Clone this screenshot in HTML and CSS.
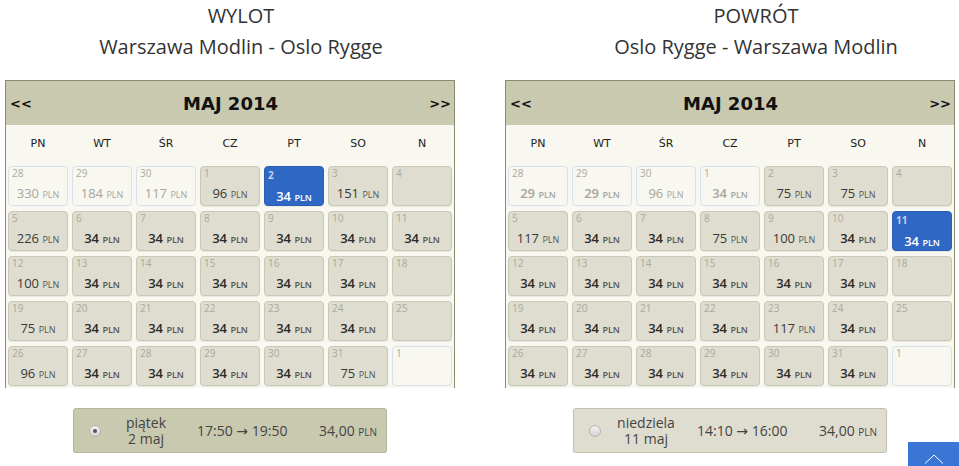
FILE: index.html
```html
<!DOCTYPE html>
<html lang="pl">

<head>
  <meta charset="UTF-8">
  <meta name="viewport" content="width=device-width, initial-scale=1.0">
  <title>Kalendarz lotów</title>
  <link rel="stylesheet" href="styles.css">
</head>

<body>
  <main class="flights">
    <!-- outbound -->
    <section class="route route--out">
      <h2 class="route-title">WYLOT<br>Warszawa Modlin - Oslo Rygge</h2>

      <div class="calendar">
        <header class="calendar-head">
          <span class="calendar-nav">&lt;&lt;</span>
          <span class="calendar-month">MAJ 2014</span>
          <span class="calendar-nav">&gt;&gt;</span>
        </header>

        <div class="weekdays">
          <span>PN</span><span>WT</span><span>ŚR</span><span>CZ</span><span>PT</span><span>SO</span><span>N</span>
        </div>

        <div class="days">
          <div class="day day--other"><span class="day-num">28</span><span class="price">330 <small>PLN</small></span></div>
          <div class="day day--other"><span class="day-num">29</span><span class="price">184 <small>PLN</small></span></div>
          <div class="day day--other"><span class="day-num">30</span><span class="price">117 <small>PLN</small></span></div>
          <div class="day"><span class="day-num">1</span><span class="price">96 <small>PLN</small></span></div>
          <div class="day day--selected"><span class="day-num">2</span><span class="price price--low">34 <small>PLN</small></span></div>
          <div class="day"><span class="day-num">3</span><span class="price">151 <small>PLN</small></span></div>
          <div class="day"><span class="day-num">4</span></div>

          <div class="day"><span class="day-num">5</span><span class="price">226 <small>PLN</small></span></div>
          <div class="day"><span class="day-num">6</span><span class="price price--low">34 <small>PLN</small></span></div>
          <div class="day"><span class="day-num">7</span><span class="price price--low">34 <small>PLN</small></span></div>
          <div class="day"><span class="day-num">8</span><span class="price price--low">34 <small>PLN</small></span></div>
          <div class="day"><span class="day-num">9</span><span class="price price--low">34 <small>PLN</small></span></div>
          <div class="day"><span class="day-num">10</span><span class="price price--low">34 <small>PLN</small></span></div>
          <div class="day"><span class="day-num">11</span><span class="price price--low">34 <small>PLN</small></span></div>

          <div class="day"><span class="day-num">12</span><span class="price">100 <small>PLN</small></span></div>
          <div class="day"><span class="day-num">13</span><span class="price price--low">34 <small>PLN</small></span></div>
          <div class="day"><span class="day-num">14</span><span class="price price--low">34 <small>PLN</small></span></div>
          <div class="day"><span class="day-num">15</span><span class="price price--low">34 <small>PLN</small></span></div>
          <div class="day"><span class="day-num">16</span><span class="price price--low">34 <small>PLN</small></span></div>
          <div class="day"><span class="day-num">17</span><span class="price price--low">34 <small>PLN</small></span></div>
          <div class="day"><span class="day-num">18</span></div>

          <div class="day"><span class="day-num">19</span><span class="price">75 <small>PLN</small></span></div>
          <div class="day"><span class="day-num">20</span><span class="price price--low">34 <small>PLN</small></span></div>
          <div class="day"><span class="day-num">21</span><span class="price price--low">34 <small>PLN</small></span></div>
          <div class="day"><span class="day-num">22</span><span class="price price--low">34 <small>PLN</small></span></div>
          <div class="day"><span class="day-num">23</span><span class="price price--low">34 <small>PLN</small></span></div>
          <div class="day"><span class="day-num">24</span><span class="price price--low">34 <small>PLN</small></span></div>
          <div class="day"><span class="day-num">25</span></div>

          <div class="day"><span class="day-num">26</span><span class="price">96 <small>PLN</small></span></div>
          <div class="day"><span class="day-num">27</span><span class="price price--low">34 <small>PLN</small></span></div>
          <div class="day"><span class="day-num">28</span><span class="price price--low">34 <small>PLN</small></span></div>
          <div class="day"><span class="day-num">29</span><span class="price price--low">34 <small>PLN</small></span></div>
          <div class="day"><span class="day-num">30</span><span class="price price--low">34 <small>PLN</small></span></div>
          <div class="day"><span class="day-num">31</span><span class="price">75 <small>PLN</small></span></div>
          <div class="day day--other"><span class="day-num">1</span></div>
        </div>
      </div>

      <label class="flight flight--checked">
        <span class="radio"></span>
        <span class="flight-date">piątek<br>2 maj</span>
        <span class="flight-time">17:50 → 19:50</span>
        <span class="flight-price">34,00 <small>PLN</small></span>
      </label>
    </section>

    <!-- return -->
    <section class="route route--back">
      <h2 class="route-title">POWRÓT<br>Oslo Rygge - Warszawa Modlin</h2>

      <div class="calendar">
        <header class="calendar-head">
          <span class="calendar-nav">&lt;&lt;</span>
          <span class="calendar-month">MAJ 2014</span>
          <span class="calendar-nav">&gt;&gt;</span>
        </header>

        <div class="weekdays">
          <span>PN</span><span>WT</span><span>ŚR</span><span>CZ</span><span>PT</span><span>SO</span><span>N</span>
        </div>

        <div class="days">
          <div class="day day--other"><span class="day-num">28</span><span class="price price--low">29 <small>PLN</small></span></div>
          <div class="day day--other"><span class="day-num">29</span><span class="price price--low">29 <small>PLN</small></span></div>
          <div class="day day--other"><span class="day-num">30</span><span class="price">96 <small>PLN</small></span></div>
          <div class="day day--other"><span class="day-num">1</span><span class="price price--low">34 <small>PLN</small></span></div>
          <div class="day"><span class="day-num">2</span><span class="price">75 <small>PLN</small></span></div>
          <div class="day"><span class="day-num">3</span><span class="price">75 <small>PLN</small></span></div>
          <div class="day"><span class="day-num">4</span></div>

          <div class="day"><span class="day-num">5</span><span class="price">117 <small>PLN</small></span></div>
          <div class="day"><span class="day-num">6</span><span class="price price--low">34 <small>PLN</small></span></div>
          <div class="day"><span class="day-num">7</span><span class="price price--low">34 <small>PLN</small></span></div>
          <div class="day"><span class="day-num">8</span><span class="price">75 <small>PLN</small></span></div>
          <div class="day"><span class="day-num">9</span><span class="price">100 <small>PLN</small></span></div>
          <div class="day"><span class="day-num">10</span><span class="price price--low">34 <small>PLN</small></span></div>
          <div class="day day--selected"><span class="day-num">11</span><span class="price price--low">34 <small>PLN</small></span></div>

          <div class="day"><span class="day-num">12</span><span class="price price--low">34 <small>PLN</small></span></div>
          <div class="day"><span class="day-num">13</span><span class="price price--low">34 <small>PLN</small></span></div>
          <div class="day"><span class="day-num">14</span><span class="price price--low">34 <small>PLN</small></span></div>
          <div class="day"><span class="day-num">15</span><span class="price price--low">34 <small>PLN</small></span></div>
          <div class="day"><span class="day-num">16</span><span class="price price--low">34 <small>PLN</small></span></div>
          <div class="day"><span class="day-num">17</span><span class="price price--low">34 <small>PLN</small></span></div>
          <div class="day"><span class="day-num">18</span></div>

          <div class="day"><span class="day-num">19</span><span class="price price--low">34 <small>PLN</small></span></div>
          <div class="day"><span class="day-num">20</span><span class="price price--low">34 <small>PLN</small></span></div>
          <div class="day"><span class="day-num">21</span><span class="price price--low">34 <small>PLN</small></span></div>
          <div class="day"><span class="day-num">22</span><span class="price price--low">34 <small>PLN</small></span></div>
          <div class="day"><span class="day-num">23</span><span class="price">117 <small>PLN</small></span></div>
          <div class="day"><span class="day-num">24</span><span class="price price--low">34 <small>PLN</small></span></div>
          <div class="day"><span class="day-num">25</span></div>

          <div class="day"><span class="day-num">26</span><span class="price price--low">34 <small>PLN</small></span></div>
          <div class="day"><span class="day-num">27</span><span class="price price--low">34 <small>PLN</small></span></div>
          <div class="day"><span class="day-num">28</span><span class="price price--low">34 <small>PLN</small></span></div>
          <div class="day"><span class="day-num">29</span><span class="price price--low">34 <small>PLN</small></span></div>
          <div class="day"><span class="day-num">30</span><span class="price price--low">34 <small>PLN</small></span></div>
          <div class="day"><span class="day-num">31</span><span class="price price--low">34 <small>PLN</small></span></div>
          <div class="day day--other"><span class="day-num">1</span></div>
        </div>
      </div>

      <label class="flight">
        <span class="radio"></span>
        <span class="flight-date">niedziela<br>11 maj</span>
        <span class="flight-time">14:10 → 16:00</span>
        <span class="flight-price">34,00 <small>PLN</small></span>
      </label>
    </section>
  </main>

  <a class="to-top" href="#">
    <svg viewBox="0 0 20 10" width="20" height="10">
      <polyline points="1,9.5 10,1 19,9.5" fill="none" stroke="#fff" stroke-width="1"></polyline>
    </svg>
  </a>
</body>

</html>
```

FILE: styles.css
```css
*,
*::before,
*::after {
  box-sizing: border-box;
}

body {
  font-family: 'Open Sans', 'DejaVu Sans', sans-serif;
  background: #fff;
  color: #333;
  margin: 0;
  overflow: hidden;
}

.flights {
  display: flex;
  gap: 18px;
}

.route {
  flex: 0 0 482px;
}

.route--back {
  flex-basis: 459px;

  .route-title {
    padding-left: 53px;
    white-space: nowrap;
  }
}

.route-title {
  margin: 0 0 18px;
  font-size: 20px;
  font-weight: 400;
  line-height: 31px;
  text-align: center;
  color: #333;
}

/* calendar box */
.calendar {
  margin-left: 5px;
  width: 450px;
  height: 308px;
  background: #f8f7f0;
  border: 1px solid #8b8b6f;
  border-bottom: 0;
}

.calendar-head {
  height: 44px;
  background: #c9c9b0;
  display: flex;
  justify-content: space-between;
  align-items: center;
  padding: 0 3px 0 4px;
  font-family: 'DejaVu Sans', Verdana, sans-serif;
  font-weight: 700;
  color: #111;

  .calendar-nav {
    font-size: 13px;
    cursor: pointer;
  }

  .calendar-month {
    font-size: 18px;
  }
}

.weekdays {
  display: grid;
  grid-template-columns: repeat(7, 60px);
  column-gap: 4px;
  padding: 0 2px;
  height: 36px;
  margin-bottom: 5px;
  align-items: center;
  font-family: 'DejaVu Sans', Verdana, sans-serif;
  font-size: 11px;
  color: #222;
  text-align: center;
}

.days {
  display: grid;
  grid-template-columns: repeat(7, 60px);
  grid-auto-rows: 40px;
  gap: 5px 4px;
  padding: 0 2px;
}

.day {
  display: flex;
  flex-direction: column;
  background: #dfddcf;
  border: 1px solid #c9c7b6;
  border-radius: 4px;
  box-shadow: 0 1px 0 rgba(0, 0, 0, .06);
  padding: 0 3px;
  cursor: pointer;

  .day-num {
    font-size: 10px;
    line-height: 12px;
    color: #a9a9a1;
  }

  .price {
    margin-top: 6px;
    font-size: 13px;
    line-height: 16px;
    text-align: center;
    color: #3a3a36;

    small {
      font-size: 9px;
      color: #555;
    }
  }

  .price--low {
    font-weight: 600;
    color: #2b2b28;
  }
}

.day--other {
  background: #f8f7f0;
  border-color: #d6e1ec;
  box-shadow: none;

  .price,
  .price--low,
  .price small {
    color: #a6a6a0;
  }
}

.day--selected {
  background: #2f67c5;
  border-color: #2b5fb6;
  padding-top: 2px;

  .day-num {
    font-weight: 700;
    color: #c3d2ee;
  }

  .price {
    margin-top: 7px;
  }

  .price,
  .price--low,
  .price small {
    color: #fff;
  }
}

/* chosen flight */
.flight {
  display: flex;
  align-items: center;
  width: 314px;
  height: 45px;
  margin: 20px 0 0 73px;
  padding-left: 15px;
  background: #dfddcf;
  border: 1px solid #c2c0ad;
  border-radius: 3px;
  box-shadow: 0 1px 1px rgba(0, 0, 0, .12);
  font-size: 14px;
  color: #444;
  cursor: pointer;

  .radio {
    width: 12px;
    height: 12px;
    border-radius: 50%;
    border: 1px solid #b4b4b0;
    background: linear-gradient(#f2f2f2, #d4d4d4);
    display: grid;
    place-items: center;
  }

  .flight-date {
    width: 70px;
    margin: 0 16px 0 10px;
    text-align: center;
    line-height: 16px;
  }

  .flight-time {
    width: 122px;
  }

  .flight-price small {
    font-size: 10px;
  }
}

.flight--checked {
  background: #c9c9b0;
  border-color: #b5b49c;

  .radio::after {
    content: '';
    width: 4px;
    height: 4px;
    border-radius: 50%;
    background: #555;
  }
}

.to-top {
  position: fixed;
  right: 0;
  bottom: -16px;
  width: 51px;
  height: 40px;
  background: #3a76d6;
  display: flex;
  justify-content: center;
  padding-top: 12px;

  svg {
    display: block;
  }
}
```
